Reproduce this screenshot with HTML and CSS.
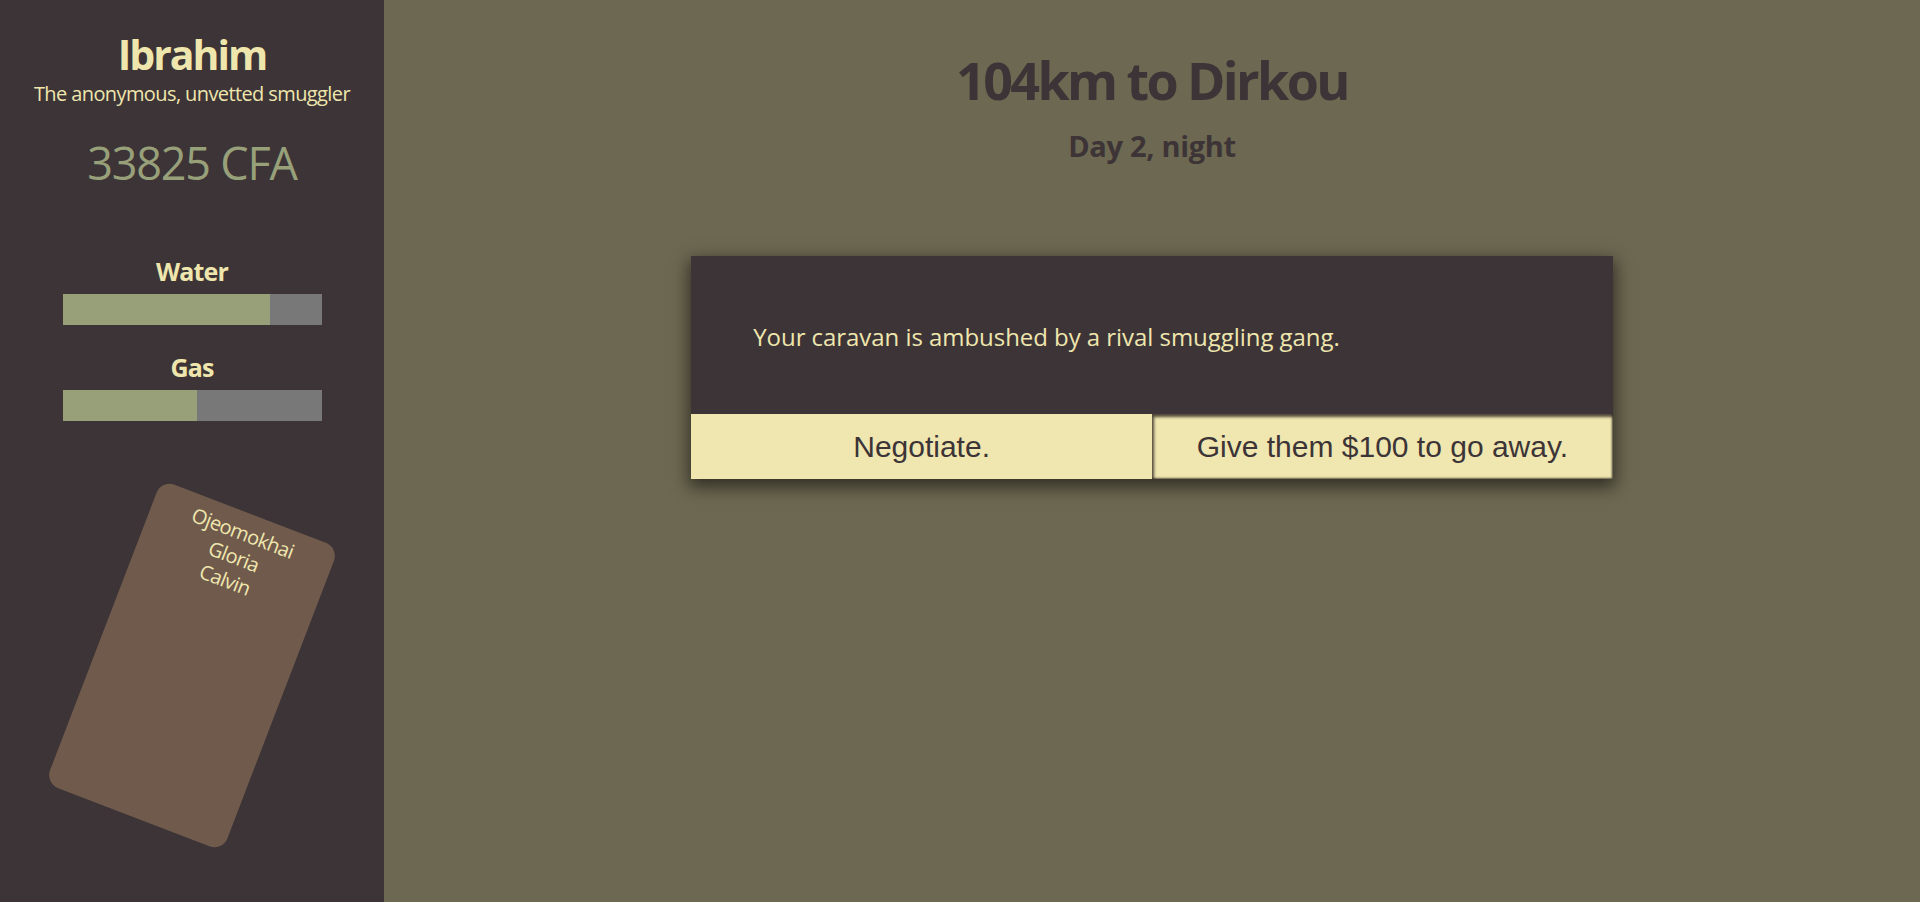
FILE: index.html
```html
<!DOCTYPE html>
<html lang="en">
<head>
<meta charset="utf-8">
<title>Smuggler</title>
<link rel="stylesheet" href="styles.css">
</head>
<body>
<div class="app">
  <aside class="sidebar">
    <h1 class="name">Ibrahim</h1>
    <p class="title">The anonymous, unvetted smuggler</p>
    <p class="money">33825 CFA</p>
    <div class="stat">
      <h3 class="stat-label">Water</h3>
      <div class="bar"><div class="bar-fill" style="width: 80%"></div></div>
    </div>
    <div class="stat stat-gas">
      <h3 class="stat-label">Gas</h3>
      <div class="bar"><div class="bar-fill" style="width: 52%"></div></div>
    </div>
    <div class="crew-card">
      <div class="crew-name">Ojeomokhai</div>
      <div class="crew-name">Gloria</div>
      <div class="crew-name">Calvin</div>
    </div>
  </aside>
  <main class="main">
    <h1 class="distance">104km to Dirkou</h1>
    <h2 class="time">Day 2, night</h2>
    <section class="event">
      <p class="event-text">Your caravan is ambushed by a rival smuggling gang.</p>
      <div class="choices">
        <button class="choice">Negotiate.</button>
        <button class="choice choice-inset">Give them $100 to go away.</button>
      </div>
    </section>
  </main>
</div>
</body>
</html>
```
FILE: styles.css
```css
html, body {
  margin: 0;
  padding: 0;
  height: 100%;
}
body {
  font-family: "Open Sans", "Noto Sans", sans-serif;
  overflow: hidden;
}
.app {
  display: flex;
  height: 902px;
}
.sidebar {
  width: 384px;
  flex: none;
  background: #3c3436;
  color: #efe6ae;
  text-align: center;
  display: flex;
  flex-direction: column;
  align-items: center;
}
.name {
  margin: 29px 0 0;
  font-size: 41px;
  line-height: 50px;
  font-weight: 700;
  letter-spacing: -2px;
}
.title {
  margin: 3px 0 0;
  font-size: 20px;
  line-height: 24px;
  letter-spacing: -0.6px;
}
.money {
  margin: 30px 0 0;
  font-size: 45px;
  line-height: 54px;
  color: #98a07a;
  font-weight: 400;
  letter-spacing: -1.2px;
}
.stat {
  margin-top: 66px;
  display: flex;
  flex-direction: column;
  align-items: center;
}
.stat-gas {
  margin-top: 27px;
}
.stat-label {
  margin: 0;
  font-size: 25px;
  line-height: 30px;
  font-weight: 700;
  letter-spacing: -0.8px;
}
.bar {
  margin-top: 8px;
  width: 259px;
  height: 31px;
  background: #787878;
  display: flex;
}
.bar-fill {
  height: 100%;
  background: #98a07a;
}
.crew-card {
  margin-top: 82px;
  width: 190px;
  height: 325px;
  box-sizing: border-box;
  padding-top: 8px;
  background: #6f5a4c;
  border-radius: 14px;
  transform: rotate(21deg);
  font-size: 20px;
  line-height: 25px;
  letter-spacing: -0.6px;
}
.main {
  flex: 1;
  background: #6d6851;
  color: #3c3436;
  display: flex;
  flex-direction: column;
  align-items: center;
}
.distance {
  margin: 48px 0 0;
  font-size: 52px;
  line-height: 64px;
  font-weight: 700;
  letter-spacing: -2.6px;
}
.time {
  margin: 16px 0 0;
  font-size: 29px;
  line-height: 36px;
  font-weight: 700;
  letter-spacing: -0.3px;
}
.event {
  margin-top: 92px;
  width: 60%;
  background: #3c3436;
  box-shadow: 0 6px 16px 2px rgba(0, 0, 0, 0.55);
}
.event-text {
  margin: 0;
  padding: 66px 62px 62px;
  font-size: 24px;
  line-height: 30px;
  color: #efe6ae;
  letter-spacing: -0.05px;
}
.choices {
  display: flex;
}
.choice {
  flex: 1;
  height: 65px;
  margin: 0;
  padding: 0;
  border: none;
  background: #efe6b0;
  color: #3c3436;
  font-family: "Liberation Sans", Arial, sans-serif;
  font-size: 30px;
}
.choice-inset {
  box-shadow: inset 1px 2px 3px 1px rgba(30, 22, 20, 0.75), inset -1px -1px 2px rgba(30, 22, 20, 0.6);
}
```
